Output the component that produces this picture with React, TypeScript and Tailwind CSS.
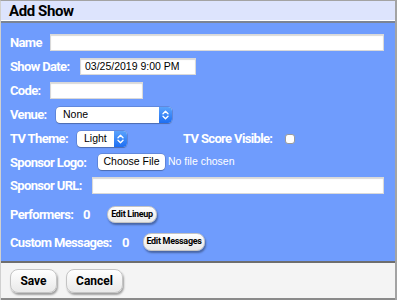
import type { ReactNode } from "react";

const narrow = "font-['Roboto','Liberation_Sans',sans-serif]";
const sans = "font-['Liberation_Sans','Arial',sans-serif]";

function Label({ children, w }: { children: ReactNode; w: string }) {
  return (
    <span className={`${w} shrink-0 whitespace-nowrap ${narrow} text-[13px] font-bold tracking-[-0.65px] text-white leading-none`}>
      {children}
    </span>
  );
}

function TextInput({ className, value }: { className: string; value?: string }) {
  return (
    <div
      className={`h-[17px] shrink-0 bg-white border border-[#d9d9d9] shadow-[inset_0_1px_1px_rgba(0,0,0,0.15)] flex items-center px-[3px] ${sans} text-[10.5px] text-black ${className}`}
    >
      {value}
    </div>
  );
}

function Chevrons() {
  return (
    <svg width="7" height="10" viewBox="0 0 7 10" fill="none" stroke="white" strokeWidth="1.4" strokeLinecap="round" strokeLinejoin="round">
      <path d="M1 3.8 3.5 1.3 6 3.8M1 6.2 3.5 8.7 6 6.2" />
    </svg>
  );
}

function Select({ value, className }: { value: string; className: string }) {
  return (
    <div className={`h-[16px] shrink-0 flex rounded-[4px] bg-white shadow-[0_0_0_0.5px_rgba(0,0,0,0.25),0_1px_1px_rgba(0,0,0,0.2)] overflow-hidden ${className}`}>
      <span className={`flex-1 flex items-center pl-[7px] ${sans} text-[10.5px] text-black`}>{value}</span>
      <span className="w-[13px] flex items-center justify-center bg-gradient-to-b from-[#5aa2fb] to-[#1d6ef2]">
        <Chevrons />
      </span>
    </div>
  );
}

function PillButton({ children, className }: { children: ReactNode; className: string }) {
  return (
    <div
      className={`shrink-0 flex items-center justify-center rounded-[8px] bg-gradient-to-b from-white to-[#e9e9e9] border border-[#c4c4c4] shadow-[1px_2px_2px_rgba(0,0,0,0.35)] ${narrow} font-bold text-black ${className}`}
    >
      {children}
    </div>
  );
}

export default function App() {
  return (
    <div className="w-[397px] h-[300px] bg-white border-t border-r-2 border-[#a3a3a3] border-l border-l-[#d0d0d0] flex flex-col">
      <div className="h-[22px] shrink-0 bg-[#dde4fd] border-b-2 border-[#7b8494] flex items-center pl-[8px] shadow-[inset_0_-1px_0_white]">
        <span className={`${narrow} text-[15px] font-bold tracking-[-0.4px] text-black leading-none`}>Add Show</span>
      </div>

      <div className="h-[238px] shrink-0 bg-[#6f9cfd] pt-[8px] pl-[9px] flex flex-col">
        <div className="h-[23px] flex items-center">
          <Label w="w-[40px]">Name</Label>
          <TextInput className="w-[334px]" />
        </div>
        <div className="h-[25px] flex items-center">
          <Label w="w-[70px]">Show Date:</Label>
          <TextInput className="w-[116px] pl-[4px]" value="03/25/2019 9:00 PM" />
        </div>
        <div className="h-[23px] flex items-center">
          <Label w="w-[40px]">Code:</Label>
          <TextInput className="w-[93px]" />
        </div>
        <div className="h-[25px] flex items-center">
          <Label w="w-[46px]">Venue:</Label>
          <Select value="None" className="w-[116px]" />
        </div>
        <div className="h-[23px] flex items-center">
          <Label w="w-[67px]">TV Theme:</Label>
          <Select value="Light" className="w-[50px]" />
          <span className="w-[56px] shrink-0" />
          <Label w="w-[102px]">TV Score Visible:</Label>
          <span className="w-[10px] h-[10px] rounded-[3px] bg-white border border-[#9a9a9a]" />
        </div>
        <div className="h-[24px] flex items-center">
          <Label w="w-[88px]">Sponsor Logo:</Label>
          <div className={`w-[67px] h-[16px] shrink-0 rounded-[4px] bg-white shadow-[0_0_0_0.5px_rgba(0,0,0,0.25),0_1px_1px_rgba(0,0,0,0.2)] flex items-center justify-center ${sans} text-[10.5px] text-black`}>
            Choose File
          </div>
          <span className={`ml-[3px] ${sans} text-[10.5px] text-white`}>No file chosen</span>
        </div>
        <div className="h-[23px] flex items-center">
          <Label w="w-[82px]">Sponsor URL:</Label>
          <TextInput className="w-[292px]" />
        </div>
        <div className="h-[35px] flex items-center">
          <Label w="w-[73px]">Performers:</Label>
          <Label w="w-[24px]">0</Label>
          <PillButton className="w-[50px] h-[17px] text-[9px] tracking-[-0.3px]">Edit Lineup</PillButton>
        </div>
        <div className="h-[20px] flex items-center">
          <Label w="w-[112px]">Custom Messages:</Label>
          <Label w="w-[21px]">0</Label>
          <PillButton className="w-[62px] h-[18px] text-[9px] tracking-[-0.3px]">Edit Messages</PillButton>
        </div>
      </div>

      <div className="flex-1 bg-[#f4f4f4] border-t-2 border-[#6e6e6e] border-b-2 border-b-[#8a8a8a] flex items-center pl-[9px] gap-[9px]">
        <PillButton className="w-[47px] h-[24px] text-[12px]">Save</PillButton>
        <PillButton className="w-[57px] h-[24px] text-[12px]">Cancel</PillButton>
      </div>
    </div>
  );
}
